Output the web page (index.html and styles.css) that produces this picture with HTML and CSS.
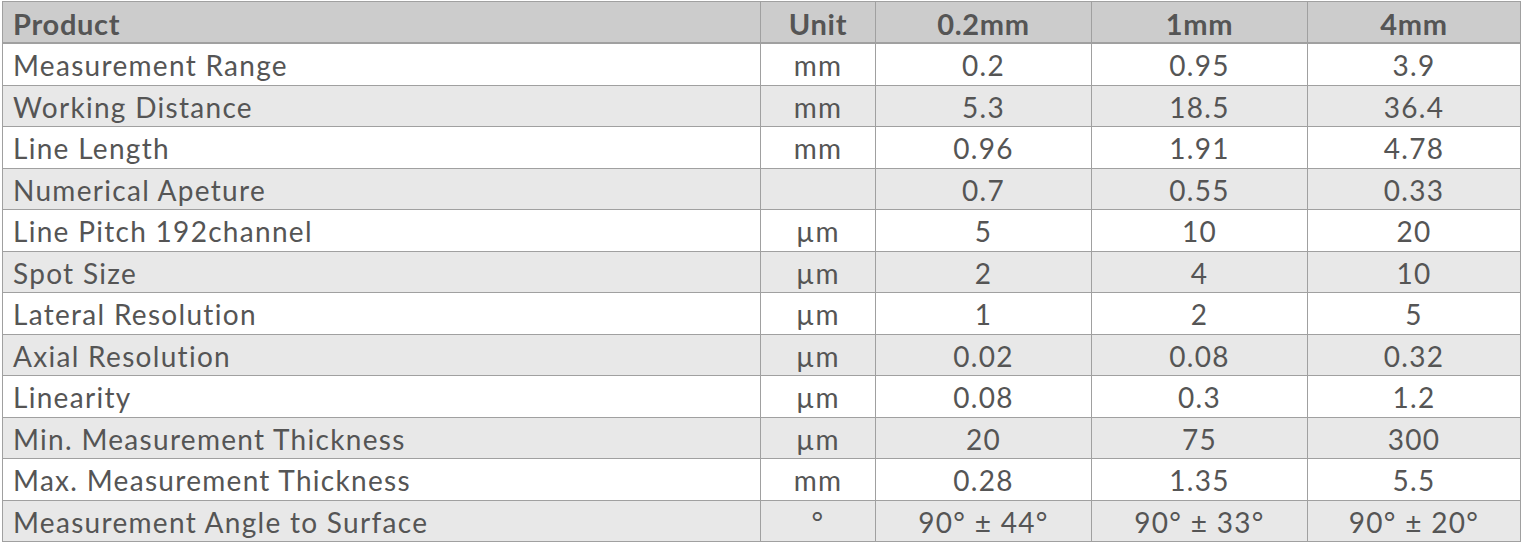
FILE: index.html
```html
<!DOCTYPE html>
<html>
<head>
<meta charset="utf-8">
<link rel="stylesheet" href="styles.css">
</head>
<body>
<table class="spec">
  <colgroup>
    <col class="c-product"><col class="c-unit"><col class="c-val"><col class="c-val"><col class="c-val4">
  </colgroup>
  <thead>
    <tr><th class="left">Product</th><th>Unit</th><th>0.2mm</th><th>1mm</th><th>4mm</th></tr>
  </thead>
  <tbody>
    <tr><td class="left">Measurement Range</td><td>mm</td><td>0.2</td><td>0.95</td><td>3.9</td></tr>
    <tr><td class="left">Working Distance</td><td>mm</td><td>5.3</td><td>18.5</td><td>36.4</td></tr>
    <tr><td class="left">Line Length</td><td>mm</td><td>0.96</td><td>1.91</td><td>4.78</td></tr>
    <tr><td class="left">Numerical Apeture</td><td></td><td>0.7</td><td>0.55</td><td>0.33</td></tr>
    <tr><td class="left">Line Pitch 192channel</td><td>µm</td><td>5</td><td>10</td><td>20</td></tr>
    <tr><td class="left">Spot Size</td><td>µm</td><td>2</td><td>4</td><td>10</td></tr>
    <tr><td class="left">Lateral Resolution</td><td>µm</td><td>1</td><td>2</td><td>5</td></tr>
    <tr><td class="left">Axial Resolution</td><td>µm</td><td>0.02</td><td>0.08</td><td>0.32</td></tr>
    <tr><td class="left">Linearity</td><td>µm</td><td>0.08</td><td>0.3</td><td>1.2</td></tr>
    <tr><td class="left">Min. Measurement Thickness</td><td>µm</td><td>20</td><td>75</td><td>300</td></tr>
    <tr><td class="left">Max. Measurement Thickness</td><td>mm</td><td>0.28</td><td>1.35</td><td>5.5</td></tr>
    <tr><td class="left">Measurement Angle to Surface</td><td>°</td><td>90° ± 44°</td><td>90° ± 33°</td><td>90° ± 20°</td></tr>
  </tbody>
</table>
</body>
</html>
```
FILE: styles.css
```css
html, body {
  margin: 0;
  padding: 0;
  background: #ffffff;
}
body {
  padding: 1px 0 0 2px;
}
.spec {
  border-collapse: collapse;
  width: 1517px;
  table-layout: fixed;
  font-family: Lato, "Liberation Sans", sans-serif;
  font-size: 28px;
  color: #555555;
  letter-spacing: 1.3px;
}
.c-product { width: 758px; }
.c-unit { width: 115px; }
.c-val { width: 216px; }
.c-val4 { width: 213px; }
.spec th, .spec td {
  border: 1px solid #a0a0a0;
  text-align: center;
  padding: 2px 10px 0 10px;
  height: 38.5px;
  line-height: 30px;
  white-space: nowrap;
}
.spec th {
  background: #cccccc;
  font-weight: 700;
  font-size: 29px;
  letter-spacing: 0.7px;
  height: 37px;
  padding-top: 3px;
  border-bottom: 2px solid #a0a0a0;
}
.spec .left {
  text-align: left;
  padding-left: 10px;
}
.spec tbody tr:nth-child(even) td {
  background: #e8e8e8;
}
```
